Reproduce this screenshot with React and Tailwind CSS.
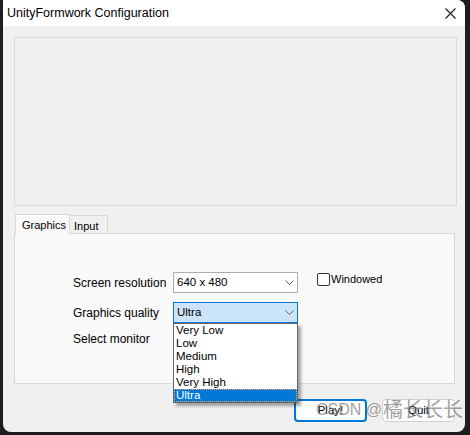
import React from "react";

const Chevron = () => (
  <svg width="9" height="5" viewBox="0 0 9 5" className="shrink-0">
    <path d="M0.5 0.5 L4.5 4.5 L8.5 0.5" fill="none" stroke="#606060" strokeWidth="1" />
  </svg>
);

const Select = ({ value, active }) => (
  <div
    className={
      "w-[125px] h-[21px] flex items-center justify-between pl-[3px] pr-[3px] border text-[11.5px] " +
      (active ? "bg-[#cce4f7] border-[#0078d7]" : "bg-white border-[#adadad]")
    }
  >
    <span>{value}</span>
    <Chevron />
  </div>
);

const qualities = ["Very Low", "Low", "Medium", "High", "Very High", "Ultra"];

export default function App() {
  return (
    <div
      className="w-[470px] h-[435px] bg-[#1d1d1d] pl-[3px] pr-[5px] pb-[3px] overflow-hidden relative text-[12px] text-black"
      style={{ fontFamily: '"Liberation Sans", Arial, sans-serif' }}
    >
      <div className="h-full flex flex-col bg-[#f0f0f0] rounded-tr-[8px] rounded-b-[8px] overflow-hidden">
        {/* title bar */}
        <div className="h-[26px] bg-white flex items-center justify-between pl-[4px] pr-[9px] shrink-0">
          <span className="text-[12.5px]">UnityFormwork Configuration</span>
          <svg width="11" height="11" viewBox="0 0 11 11">
            <path d="M0.5 0.5 L10.5 10.5 M10.5 0.5 L0.5 10.5" stroke="#1a1a1a" strokeWidth="1.1" />
          </svg>
        </div>

        <div className="flex-1 pl-[11px] pt-[11px]">
          {/* banner area */}
          <div className="w-[443px] h-[169px] border border-[#dadada] bg-[#f0f0f0]" />

          {/* tabs */}
          <div className="mt-[7px] flex items-end h-[20px] pl-[1px] text-[11px]">
            <div className="h-[20px] w-[55px] bg-[#f9f9f9] border border-b-0 border-[#d9d9d9] pl-[6px] pt-[2px] relative z-10 -mb-px">
              Graphics
            </div>
            <div className="h-[18px] w-[38px] bg-[#f0f0f0] border border-l-0 border-b-0 border-[#d9d9d9] pl-[4px] pt-[2px]">
              Input
            </div>
          </div>

          {/* tab panel */}
          <div className="w-[441px] h-[151px] border border-[#d9d9d9] bg-[#f9f9f9] pt-[38px] pl-[58px] relative">
            <div className="flex flex-col">
              <div className="flex items-center h-[21px]">
                <span className="w-[100px]">Screen resolution</span>
                <Select value="640 x 480" />
                <div className="flex items-center ml-[19px] -mt-[7px] text-[11px]">
                  <span className="w-[13px] h-[13px] border border-[#333] rounded-[2px] bg-white mr-[1px]" />
                  <span>Windowed</span>
                </div>
              </div>
              <div className="flex items-center h-[21px] mt-[9px]">
                <span className="w-[100px]">Graphics quality</span>
                <div className="relative">
                  <Select value="Ultra" active />
                  {/* open dropdown */}
                  <div className="absolute left-0 top-[21px] w-[125px] bg-white border border-[#646464] shadow-[3px_3px_3px_rgba(0,0,0,0.35)] z-20 leading-[13px] text-[11.5px]">
                    {qualities.map((q) => (
                      <div
                        key={q}
                        className={
                          "h-[13px] pl-[2px] " +
                          (q === "Ultra"
                            ? "bg-[#0078d7] text-white outline-1 outline-dotted outline-[#f7a35a] -outline-offset-1"
                            : "")
                        }
                      >
                        {q}
                      </div>
                    ))}
                  </div>
                </div>
              </div>
              <div className="flex items-center h-[21px] mt-[5px]">
                <span className="w-[100px]">Select monitor</span>
                <Select value="" />
              </div>
            </div>
          </div>

          {/* buttons */}
          <div className="w-[441px] mt-[15px] flex justify-end gap-[15px] text-[11.5px]">
            <button className="w-[73px] h-[23px] bg-[#fdfdfd] border-2 border-[#0078d7] rounded-[4px] flex items-center justify-center">
              Play!
            </button>
            <button className="w-[73px] h-[23px] bg-[#fdfdfd] border border-[#d0d0d0] rounded-[4px] flex items-center justify-center">
              Quit
            </button>
          </div>
        </div>
      </div>

      {/* watermark */}
      <div
        className="absolute left-[316px] top-[398px] h-[24px] flex items-center text-[rgba(120,120,120,0.7)] pointer-events-none whitespace-nowrap"
        style={{ fontFamily: '"Liberation Sans", "Noto Sans CJK SC", sans-serif' }}
      >
        <span className="text-[16px]">CSDN @</span>
        <span className="text-[20px] ml-[1px]">橘长长长</span>
      </div>
    </div>
  );
}
